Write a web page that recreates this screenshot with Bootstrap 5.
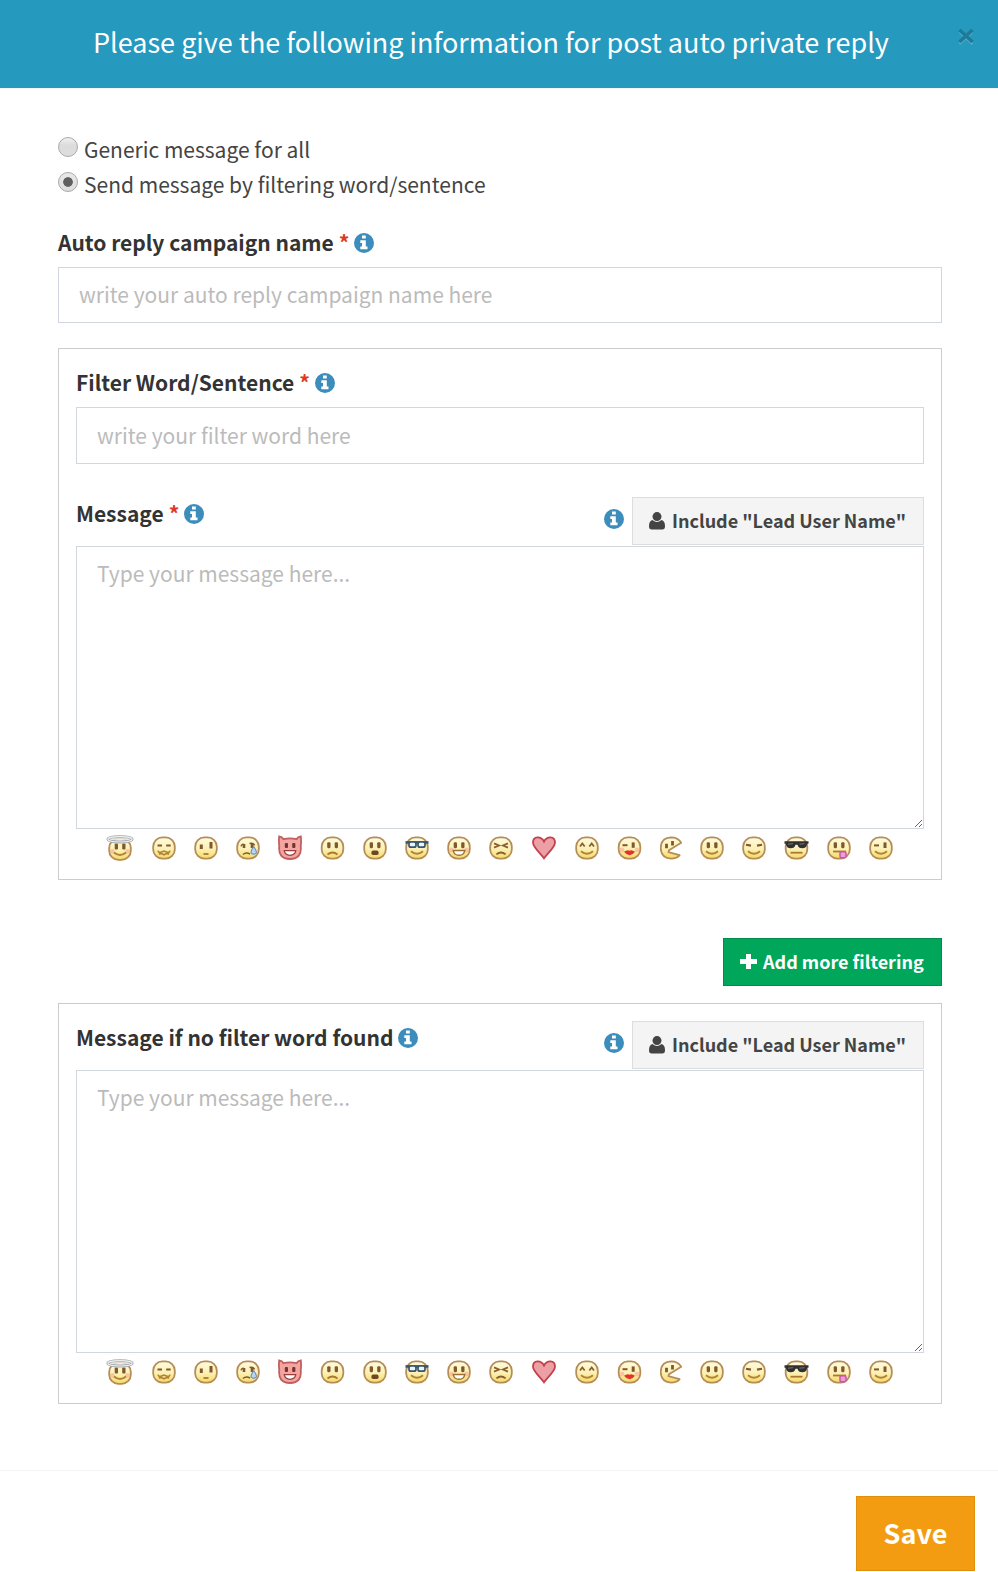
<!DOCTYPE html>
<html lang="en">
<head>
<meta charset="utf-8">
<meta name="viewport" content="width=device-width, initial-scale=1">
<title>Auto private reply</title>
<link href="https://cdn.jsdelivr.net/npm/bootstrap@5.3.0/dist/css/bootstrap.min.css" rel="stylesheet">
<style>
body{font-family:"Noto Sans CJK SC",sans-serif;font-size:21px;line-height:35px;color:#444;background:#fff}
.top-bar{background:#2599be;height:89px;border-bottom:1px solid #f4f4f4}
.top-title{font-size:27px;line-height:40px;margin:22px 0 0 93px;color:#fff;white-space:nowrap;font-weight:400}
.close-x{width:16px;height:18px;margin:28px 24px 0 auto;padding:0;border:0;background:none;display:flex}
.main-area{padding:43px 56px 0 58px}
.main-area label,.main-area .lbl{display:flex;align-items:center;white-space:nowrap;height:35px}
.main-area .lbl{font-weight:700;color:#333;font-size:21px;padding-top:1px}
.name-lbl{margin:22px 0 8px}
.req{color:#dd3b20;margin-left:5px;margin-right:5px}
.dot{appearance:none;width:20px;height:20px;border-radius:50%;border:1px solid #a9a9a9;background:linear-gradient(#f0f0f0,#dcdcdc 40%,#dedede);margin:-5px 6px 0 0;flex:none}
.dot:checked{background:radial-gradient(circle,#5f5f5f 4.4px,transparent 5.2px),linear-gradient(#e8e8e8,#dedede)}
.form-control,.form-control:focus{border:1px solid #d2d6de;border-radius:0;font-size:21px;line-height:30px;padding:0 20px 3px;height:56px;box-shadow:none;color:#555;display:block}
.form-control::placeholder{color:#bbb;opacity:1}
.form-control.word-input{height:57px;padding-bottom:2px}
textarea.form-control{height:283px;padding:11px 20px;resize:vertical}
.panel-box{border:1px solid #ccc;padding:15px 17px 0}
.filter-box{margin-top:25px;height:532px}
.fallback-box{height:401px}
.msg-row{height:51px}
.filter-box .msg-row{margin-top:31px}
.info{width:20px;height:20px;flex:none;margin-top:1px}
.info-btn{margin:12px 8px 0 0}
.info-plain{margin-left:5px}
.btn{border-radius:0;font-weight:700;font-size:18px;line-height:26px;height:48px;padding:0 16px 2px;display:flex;align-items:center;white-space:nowrap}
.btn-lead{background:#f4f4f4;border-color:#ddd;color:#444;width:292px}
.btn-lead svg{margin:3px 7px 0 0}
.btn-more{background:#00a65a;border-color:#008d4c;color:#fff;width:219px}
.btn-more svg{margin:1px 6px 0 0}
.more-row{margin:58px 0 17px}
.btn-keep{background:#f39c12;border-color:#e08e0b;color:#fff;width:119px;height:75px;font-size:27px;padding:0 0 2px;justify-content:center}
.faces{gap:18px;margin:6px 0 0 30px;height:27px}
.faces svg{flex:none;height:26px}
.foot{border-top:1px solid #f4f4f4;margin-top:66px;padding:25px 23px 0 0}
</style>
</head>
<body>
<svg width="0" height="0" class="position-absolute" aria-hidden="true">
<defs>
<linearGradient id="gold" x1="0" y1="0" x2="0" y2="1"><stop offset="0" stop-color="#fffbe2"/><stop offset=".55" stop-color="#fcf0b4"/><stop offset="1" stop-color="#f4d866"/></linearGradient>
<g id="head"><rect x="-10.8" y="-10.6" width="21.6" height="21.2" rx="9.2" fill="url(#gold)" stroke="#b58d55" stroke-width="1.8"/></g>
<g id="eyes" fill="#80592a"><rect x="-5.3" y="-5.8" width="3.3" height="6" rx="1.1"/><rect x="2.2" y="-5.8" width="3.3" height="6" rx="1.1"/></g>
<g id="blush" fill="#f9b09a" opacity=".65"><circle cx="-7.6" cy="2" r="2.4"/><circle cx="7.6" cy="2" r="2.4"/></g>
<path id="grin" d="M-6 3.2Q0 8.2 6 3.2" fill="none" stroke="#b08335" stroke-width="2"/>
<symbol id="i-info" viewBox="0 0 20 20"><circle cx="10" cy="10" r="10" fill="#3c8dbc"/><path d="M8 2.5h3.8v3H8zM6.3 7.3h5.5v6.3h1.7v2.7H6.3v-2.7H8V9.9H6.3z" fill="#fff"/></symbol>
<symbol id="i-user" viewBox="0 0 16 18"><circle cx="8" cy="4.6" r="4.5" fill="#444"/><path d="M3.5 8Q8 12 12.5 8Q16 8.7 16 14.2Q16 17.5 13.3 17.5H2.7Q0 17.5 0 14.2Q0 8.7 3.5 8Z" fill="#444"/></symbol>
<symbol id="f-angel" viewBox="-14 -13 28 26"><g transform="translate(0 1.3)"><use href="#head"/><use href="#blush"/><use href="#eyes"/><use href="#grin"/></g><ellipse cy="-8.7" rx="12.2" ry="2.7" fill="#fff" fill-opacity=".7" stroke="#a4a9ad" stroke-width="2.9"/><ellipse cy="-8.7" rx="12.2" ry="2.7" fill="none" stroke="#eef1f3" stroke-width="1.1"/></symbol>
<symbol id="f-curly" viewBox="-12 -13 24 26"><use href="#head"/><path d="M-6.5-2.6h4.5M2.2-2.6h4.5" stroke="#80592a" stroke-width="2"/><path d="M-6 2.6Q-5.5 5-3 4.2L0 3L3 4.2Q5.5 5 6 2.6M-5 6.3L-3 5.4L0 6.8L3 5.4L5 6.3" fill="none" stroke="#b08335" stroke-width="1.6"/></symbol>
<symbol id="f-unsure" viewBox="-12 -13 24 26"><use href="#head"/><path d="M-4.7-3.6v4.5M5-6v6.5" stroke="#80592a" stroke-width="3"/><path d="M-2.5 6h5" stroke="#a9792c" stroke-width="1.8"/></symbol>
<symbol id="f-cry" viewBox="-12 -13 24 26"><use href="#head"/><path d="M-4-4v4M4-4v4" stroke="#80592a" stroke-width="2.6"/><path d="M-7-1.6q.5-2 2.5-2.3M1.5-4.5q4-1 5 2M-5 6.5Q-2 4 2 6" fill="none" stroke="#80592a" stroke-width="1.5"/><path d="M5.7-1.5Q9.2 3.3 8.2 5.1Q5.7 7.2 3.2 5.1Q2.4 3.3 5.7-1.5Z" fill="#b6d4f4" stroke="#6a8fc2" stroke-width="1.1"/></symbol>
<symbol id="f-devil" viewBox="-12 -13 24 26"><path d="M-10.8-11.7Q-8-11.5-6.5-8.8Q0-10.5 6.5-8.8Q8-11.5 10.8-11.7Q11.4-6 10.7-2.2Q12.3 10.8 0 11Q-12.3 10.8-10.7-2.2Q-11.4-6-10.8-11.7Z" fill="#f3a5a0" stroke="#c15f60" stroke-width="1.8"/><g fill="#783233"><rect x="-5.2" y="-5" width="3.2" height="5" rx="1"/><rect x="2.2" y="-5" width="3.2" height="5" rx="1"/></g><path d="M-5.8 2.7H5.8Q5 7.3 0 7.3Q-5 7.3-5.8 2.7Z" fill="#fff" stroke="#9b3e3f" stroke-width="1.2"/></symbol>
<symbol id="f-sad" viewBox="-12.5 -13 25 26"><use href="#head"/><use href="#eyes"/><path d="M-5 6.5Q0 2.5 5 6.5" fill="none" stroke="#a9792c" stroke-width="1.8"/></symbol>
<symbol id="f-gasp" viewBox="-12 -13 24 26"><use href="#head"/><use href="#eyes"/><rect x="-3.6" y="2.6" width="7.2" height="4.4" rx="1.8" fill="#6f4624"/></symbol>
<symbol id="f-specs" viewBox="-12 -13 24 26"><use href="#head"/><use href="#grin"/><path d="M-11.5-5.6h23" stroke="#38566c" stroke-width="2.6"/><rect x="-8" y="-6" width="7" height="5.2" rx="2" fill="#eaf4fa" stroke="#38566c" stroke-width="1.7"/><rect x="1" y="-6" width="7" height="5.2" rx="2" fill="#eaf4fa" stroke="#38566c" stroke-width="1.7"/></symbol>
<symbol id="f-laugh" viewBox="-12 -13 24 26"><use href="#head"/><use href="#blush"/><use href="#eyes"/><path d="M-5.8 2.5H5.8Q5 7.3 0 7.3Q-5 7.3-5.8 2.5Z" fill="#fff" stroke="#9c6f35" stroke-width="1.4"/></symbol>
<symbol id="f-grumpy" viewBox="-12 -13 24 26"><use href="#head"/><path d="M-7-4.6L-2-2.5L-7-.4M7-4.6L2-2.5L7-.4M-4.6 6.4Q0 2.5 4.6 6.4" fill="none" stroke="#8a602c" stroke-width="1.8"/></symbol>
<symbol id="f-heart" viewBox="-13 -13 26 26"><path d="M0 10.4C-3 5.5-11-.5-11-5.6C-11-12-3-12.3 0-6.5C3-12.3 11-12 11-5.6C11-.5 3 5.5 0 10.4Z" fill="#eca0a6" stroke="#c2414b" stroke-width="1.8"/></symbol>
<symbol id="f-happy" viewBox="-12 -13 24 26"><use href="#head"/><path d="M-7-1.5L-4.7-4.5L-2.3-1.5M2.3-1.5L4.7-4.5L7-1.5" fill="none" stroke="#8a602c" stroke-width="1.8"/><use href="#grin"/></symbol>
<symbol id="f-kiss" viewBox="-12.5 -13 25 26"><use href="#head"/><use href="#blush"/><path d="M-7-2.8h5" stroke="#80592a" stroke-width="2"/><path d="M3.7-5.6v5.4" stroke="#80592a" stroke-width="3"/><path d="M-5.5 3.8Q-2 1.4 0 2.8Q2 1.4 5.5 3.8Q3 7.2 0 7.2Q-3 7.2-5.5 3.8Z" fill="#e6302c"/></symbol>
<symbol id="f-pac" viewBox="-11 -13 22 26"><path d="M10.2-5.2Q7-10.6 0-10.6Q-10 -10.2-10.3 0Q-10 10.2 0 10.6Q6 10.6 8.6 7.2L-2.6 4.2L-2 2.2Z" fill="url(#gold)" stroke="#b58d55" stroke-width="1.8" stroke-linejoin="round"/><path d="M-4.5-4.2V0.2M1.5-7V-2.5" stroke="#80592a" stroke-width="2.8"/></symbol>
<symbol id="f-smile" viewBox="-12 -13 24 26"><use href="#head"/><use href="#eyes"/><use href="#grin"/></symbol>
<symbol id="f-squint" viewBox="-12 -13 24 26"><use href="#head"/><path d="M-8-3.2l5 .8M8-3.2l-5 .8" stroke="#80592a" stroke-width="2.1"/><use href="#grin"/></symbol>
<symbol id="f-shades" viewBox="-12.5 -13 25 26"><use href="#head"/><path d="M-12-6.7H12V-4.2H10.6Q10 .3 5.8 .3Q1.8 .3 1-3.2H-1Q-1.8 .3-5.8 .3Q-10 .3-10.6-4.2H-12Z" fill="#303030"/><path d="M-8.5-3.8L-3.5-4.3M3-3.8L8-4.3" stroke="#777" stroke-width="1"/><path d="M-6 4.7H6" stroke="#a9792c" stroke-width="1.8"/></symbol>
<symbol id="f-tongue" viewBox="-12 -13 24 26"><use href="#head"/><use href="#eyes"/><path d="M-6 3.5H7" stroke="#a9792c" stroke-width="1.8"/><rect x="1" y="3.8" width="6" height="6" rx="1.5" fill="#ee9bd6" stroke="#c956aa" stroke-width="1.5"/></symbol>
<symbol id="f-wink" viewBox="-12 -13 24 26"><use href="#head"/><path d="M-7-2.6h5" stroke="#80592a" stroke-width="2"/><path d="M4-5.6V0" stroke="#80592a" stroke-width="3"/><use href="#grin"/></symbol>
</defs>
</svg>

<header class="top-bar d-flex align-items-start">
<h1 class="top-title">Please give the following information for post auto private reply</h1>
<button type="button" class="close-x" aria-label="Close"><svg width="16" height="18" viewBox="0 0 16 18"><path d="M1.5 4L14.5 16M14.5 4L1.5 16" stroke="#5cb4cf" stroke-width="2"/><path d="M1.5 2L14.5 14M14.5 2L1.5 14" stroke="#1e7a98" stroke-width="3.6"/></svg></button>
</header>

<main class="main-area">
<label><input type="radio" name="mode" class="dot"><span>Generic message for all</span></label>
<label><input type="radio" name="mode" class="dot" checked><span>Send message by filtering word/sentence</span></label>

<div class="lbl name-lbl"><span>Auto reply campaign name</span><span class="req">*</span><svg class="info"><use href="#i-info"/></svg></div>
<input type="text" class="form-control" placeholder="write your auto reply campaign name here">

<section class="panel-box filter-box">
<div class="lbl mb-2"><span>Filter Word/Sentence</span><span class="req">*</span><svg class="info"><use href="#i-info"/></svg></div>
<input type="text" class="form-control word-input" placeholder="write your filter word here">
<div class="msg-row d-flex justify-content-between">
<div class="lbl"><span>Message</span><span class="req">*</span><svg class="info"><use href="#i-info"/></svg></div>
<div class="d-flex align-items-start mt-auto mb-auto"><svg class="info info-btn"><use href="#i-info"/></svg><button type="button" class="btn btn-lead"><svg width="16" height="18"><use href="#i-user"/></svg><span>Include "Lead User Name"</span></button></div>
</div>
<textarea class="form-control" placeholder="Type your message here..."></textarea>
<div class="faces d-flex"></div>
</section>

<div class="more-row d-flex justify-content-end"><button type="button" class="btn btn-more"><svg width="17" height="17" viewBox="0 0 17 17"><path d="M6 1h5v5h6v5h-6v5H6v-5H0V6h6z" fill="#fff"/></svg><span>Add more filtering</span></button></div>

<section class="panel-box fallback-box">
<div class="msg-row d-flex justify-content-between">
<div class="lbl"><span>Message if no filter word found</span><svg class="info info-plain"><use href="#i-info"/></svg></div>
<div class="d-flex align-items-start mt-auto mb-auto"><svg class="info info-btn"><use href="#i-info"/></svg><button type="button" class="btn btn-lead"><svg width="16" height="18"><use href="#i-user"/></svg><span>Include "Lead User Name"</span></button></div>
</div>
<textarea class="form-control" placeholder="Type your message here..."></textarea>
<div class="faces d-flex"></div>
</section>
</main>

<footer class="foot d-flex justify-content-end"><button type="button" class="btn btn-keep">Save</button></footer>

<script src="https://cdn.jsdelivr.net/npm/bootstrap@5.3.0/dist/js/bootstrap.bundle.min.js"></script>
<script>
const faces=[["angel",28],["curly",24],["unsure",24],["cry",24],["devil",24],["sad",25],["gasp",24],["specs",24],["laugh",24],["grumpy",24],["heart",26],["happy",24],["kiss",25],["pac",22],["smile",24],["squint",24],["shades",25],["tongue",24],["wink",24]];
document.querySelectorAll(".faces").forEach(row=>{row.innerHTML=faces.map(([n,w])=>`<svg width="${w}" height="26" role="img" aria-label="${n}"><use href="#f-${n}"/></svg>`).join("")});
</script>
</body>
</html>
